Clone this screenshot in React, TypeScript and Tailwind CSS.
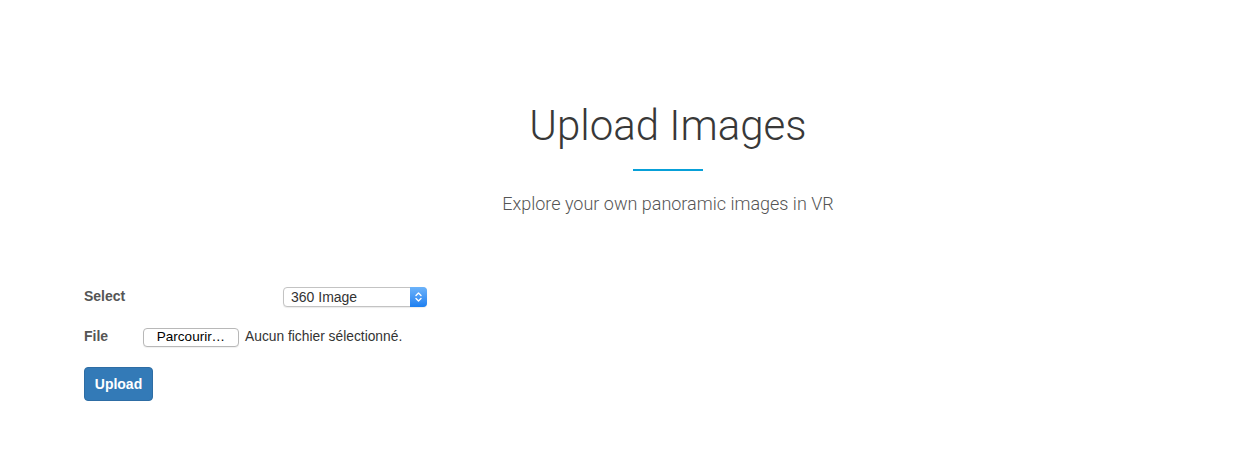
import React from "react";

export default function App() {
  return (
    <div className="w-[1248px] h-[460px] bg-white overflow-hidden">
      <div className="pl-[88px] pt-[98px] flex flex-col items-center font-['Roboto',sans-serif]">
        <h1 className="text-[42px] leading-[56px] font-light text-[#383838]">Upload Images</h1>
        <div className="mt-[15px] w-[70px] h-[2px] bg-[#08a0d8]" />
        <p className="mt-[21px] text-[18px] leading-[24px] font-light text-[#555]">
          Explore your own panoramic images in VR
        </p>
      </div>
      <div className="pl-[84px] mt-[71px] font-['Liberation_Sans',Arial,sans-serif] text-[14px]">
        <div className="flex items-center h-[20px]">
          <label className="w-[199px] font-bold text-[#555] -mt-[2px]">Select</label>
          <div className="w-[144px] h-[20px] rounded-[4px] border border-[#c3c3c3] bg-white flex items-stretch shadow-[0_1px_1px_rgba(0,0,0,0.08)]">
            <span className="flex-1 pl-[7px] text-[14px] leading-[18px] text-[#333]">360 Image</span>
            <span className="w-[17px] -my-px -mr-px rounded-r-[4px] bg-gradient-to-b from-[#6cb3fa] to-[#1a7ff0] flex items-center justify-center">
              <svg width="9" height="12" viewBox="0 0 9 12" fill="none" stroke="white" strokeWidth="1.4" strokeLinecap="round" strokeLinejoin="round">
                <path d="M2 4.5 L4.5 2 L7 4.5" />
                <path d="M2 7.5 L4.5 10 L7 7.5" />
              </svg>
            </span>
          </div>
        </div>
        <div className="flex items-center mt-[20px] h-[20px]">
          <label className="w-[59px] font-bold text-[#555] -mt-[2px]">File</label>
          <span className="w-[96px] h-[19px] rounded-[4px] border border-[#b8b8b8] bg-white flex items-center justify-center text-[13.5px] text-black shadow-[0_1px_1px_rgba(0,0,0,0.06)]">
            Parcourir…
          </span>
          <span className="ml-[6px] text-[13.8px] text-[#333]">Aucun fichier sélectionné.</span>
        </div>
        <button className="mt-[20px] w-[69px] h-[34px] rounded-[4px] bg-[#337ab7] border border-[#2e6da4] text-white font-bold text-[14px]">
          Upload
        </button>
      </div>
    </div>
  );
}
